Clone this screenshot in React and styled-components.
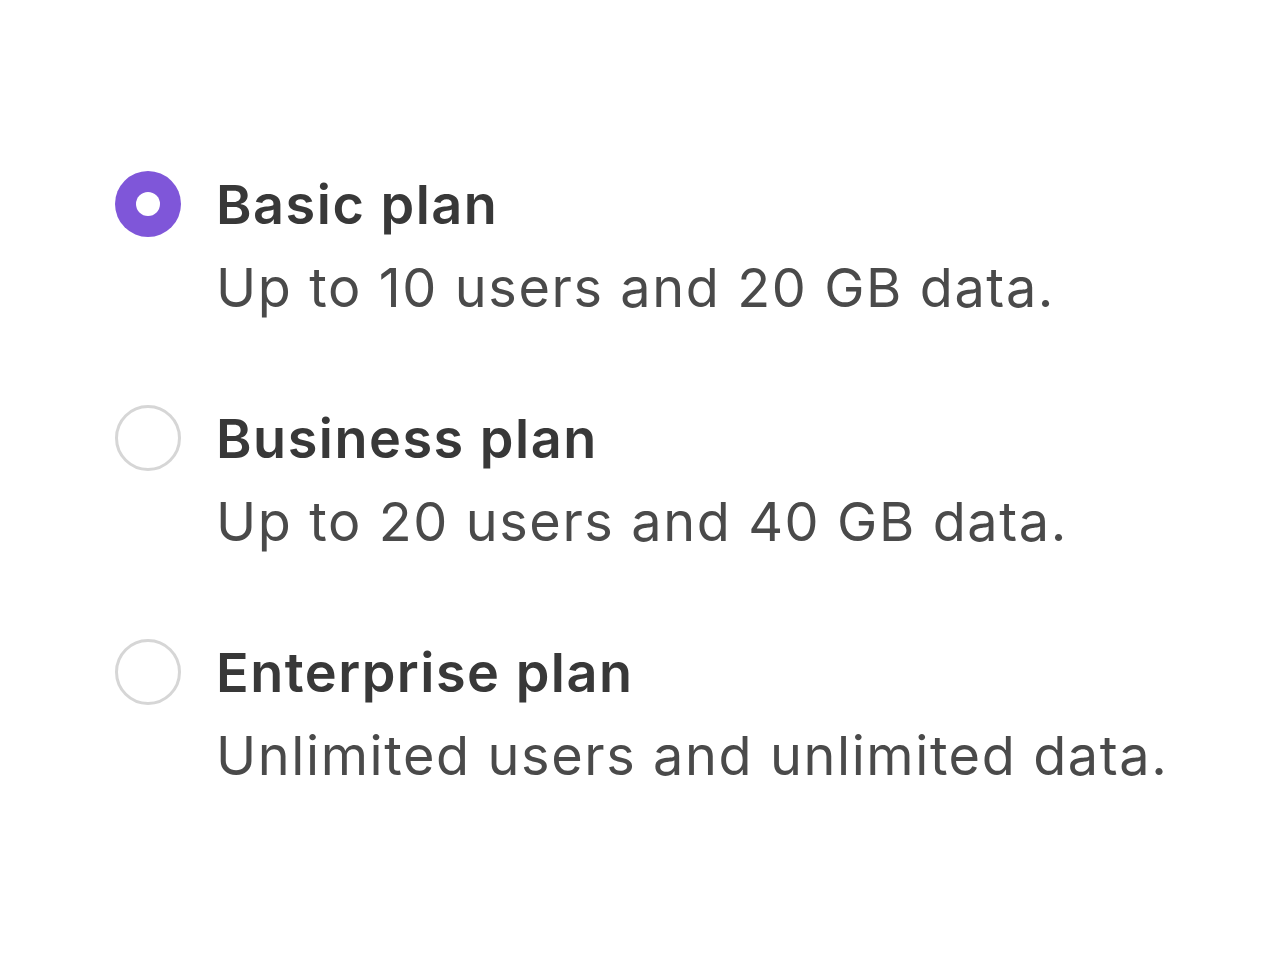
import React, { useState } from "react";
import styled, { createGlobalStyle, css } from "styled-components";

const GlobalStyle = createGlobalStyle`
   html, body {
      margin: 0;
      padding: 0;
      background: #ffffff;
   }
   body {
      font-family: Inter, "Noto Sans", sans-serif;
      -webkit-font-smoothing: antialiased;
   }
`;

const Page = styled.div`
   width: 1280px;
   height: 960px;
   box-sizing: border-box;
   padding: 163px 0 0 115px;
`;
const RadioGroup = styled.div`
   display: flex;
   flex-direction: column;
   row-gap: 68px;
`;
const Option = styled.label`
   display: flex;
   align-items: flex-start;
   column-gap: 35px;
   cursor: pointer;
`;
const Radio = styled.span`
   flex-shrink: 0;
   width: 66px;
   height: 66px;
   margin-top: 8px;
   box-sizing: border-box;
   border-radius: 50%;
   display: flex;
   align-items: center;
   justify-content: center;
   border: 3.5px solid #d6d6d6;
   background: #ffffff;

   ${(props) =>
      props.checked &&
      css`
         border: none;
         background: #7f56d9;
         &::after {
            content: "";
            width: 24px;
            height: 24px;
            border-radius: 50%;
            background: #ffffff;
         }
      `};
`;
const OptionText = styled.div`
   display: flex;
   flex-direction: column;
`;
const OptionTitle = styled.span`
   font-size: 54px;
   line-height: 83px;
   font-weight: 600;
   color: #383838;
   letter-spacing: 1.5px;
`;
const OptionDescription = styled.span`
   font-size: 54px;
   line-height: 83px;
   font-weight: 400;
   color: #4a4a4a;
   letter-spacing: 1.6px;
`;

const plans = [
   { id: "basic", title: "Basic plan", description: "Up to 10 users and 20 GB data." },
   { id: "business", title: "Business plan", description: "Up to 20 users and 40 GB data." },
   { id: "enterprise", title: "Enterprise plan", description: "Unlimited users and unlimited data." },
];

const App = () => {
   const [selected, setSelected] = useState("basic");
   return (
      <>
         <GlobalStyle />
         <Page>
            <RadioGroup role="radiogroup">
               {plans.map((plan) => (
                  <Option key={plan.id} onClick={() => setSelected(plan.id)}>
                     <Radio role="radio" aria-checked={selected === plan.id} checked={selected === plan.id} />
                     <OptionText>
                        <OptionTitle>{plan.title}</OptionTitle>
                        <OptionDescription>{plan.description}</OptionDescription>
                     </OptionText>
                  </Option>
               ))}
            </RadioGroup>
         </Page>
      </>
   );
};
export default App;
